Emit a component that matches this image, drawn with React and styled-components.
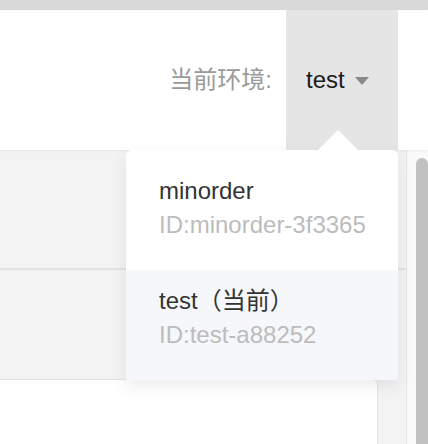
import React from "react";
import styled, { createGlobalStyle } from "styled-components";

const Global = createGlobalStyle`
  html, body { margin: 0; padding: 0; }
  body {
    background: #f3f3f3;
    font-family: "Liberation Sans", "Noto Sans CJK SC", sans-serif;
    overflow: hidden;
  }
`;

const Page = styled.div`
  width: 428px;
  height: 444px;
  display: flex;
  flex-direction: column;
  overflow: hidden;
`;

const TopStrip = styled.div`
  height: 10px;
  background: #d9d9d9;
  flex: none;
`;

const Header = styled.header`
  position: relative;
  z-index: 2;
  height: 140px;
  flex: none;
  background: #fff;
  box-shadow: 0 1px 3px rgba(0, 0, 0, 0.06);
  display: flex;
  justify-content: flex-end;
  align-items: center;
  padding-right: 30px;
`;

const EnvLabel = styled.span`
  font-size: 24px;
  line-height: 34px;
  color: #9a9a9a;
  margin-right: 14px;
  white-space: nowrap;
`;

const Selector = styled.div`
  position: relative;
  width: 112px;
  height: 140px;
  box-sizing: border-box;
  padding-left: 20px;
  background: #e5e5e5;
  display: flex;
  align-items: center;
`;

const Current = styled.span`
  font-size: 24px;
  line-height: 34px;
  color: #1a1a1a;
`;

const Caret = styled.span`
  width: 0;
  height: 0;
  margin-left: 10px;
  margin-top: 2px;
  border-left: 7px solid transparent;
  border-right: 7px solid transparent;
  border-top: 8px solid #8a8a8a;
`;

const Dropdown = styled.div`
  position: absolute;
  top: 100%;
  right: 0;
  width: 272px;
  padding-top: 10px;
  background: #fff;
  border-radius: 6px 6px 2px 2px;
  box-shadow: 0 6px 18px rgba(0, 0, 0, 0.08);
`;

const Arrow = styled.span`
  position: absolute;
  top: -20px;
  left: 192px;
  width: 0;
  height: 0;
  border-left: 20px solid transparent;
  border-right: 20px solid transparent;
  border-bottom: 20px solid #fff;
`;

const Item = styled.div`
  padding: 14px 0 28px 33px;
  background: ${(p) => (p.$active ? "#f5f7fa" : "transparent")};
  display: flex;
  flex-direction: column;
`;

const ItemName = styled.span`
  font-size: 24px;
  line-height: 34px;
  color: #333;
  white-space: nowrap;
`;

const ItemId = styled.span`
  font-size: 24px;
  line-height: 34px;
  color: #bcbcbc;
  white-space: nowrap;
`;

const Main = styled.div`
  flex: 1;
  display: flex;
  min-height: 0;
`;

const Content = styled.div`
  flex: 1;
  display: flex;
  flex-direction: column;
  background: #f3f3f3;
`;

const Panel = styled.div`
  height: 118px;
  flex: none;
  border-bottom: 2px solid #e2e2e2;
`;

const Gap = styled.div`
  height: 109px;
  flex: none;
`;

const Card = styled.div`
  flex: 1;
  margin-right: 28px;
  background: #fff;
  border: 1px solid #e3e3e3;
  border-left: 0;
  border-bottom: 0;
  border-radius: 0 5px 0 0;
`;

const Track = styled.div`
  width: 22px;
  flex: none;
  background: #fafafa;
  border-left: 1px solid #e4e4e4;
  padding-top: 8px;
  padding-left: 9px;
  box-sizing: border-box;
`;

const Thumb = styled.div`
  width: 12px;
  height: 400px;
  border-radius: 6px;
  background: #c1c1c1;
`;

export default function App() {
  return (
    <Page>
      <Global />
      <TopStrip />
      <Header>
        <EnvLabel>当前环境:</EnvLabel>
        <Selector>
          <Current>test</Current>
          <Caret />
          <Dropdown>
            <Arrow />
            <Item>
              <ItemName>minorder</ItemName>
              <ItemId>ID:minorder-3f3365</ItemId>
            </Item>
            <Item $active>
              <ItemName>test（当前）</ItemName>
              <ItemId>ID:test-a88252</ItemId>
            </Item>
          </Dropdown>
        </Selector>
      </Header>
      <Main>
        <Content>
          <Panel />
          <Gap />
          <Card />
        </Content>
        <Track>
          <Thumb />
        </Track>
      </Main>
    </Page>
  );
}
